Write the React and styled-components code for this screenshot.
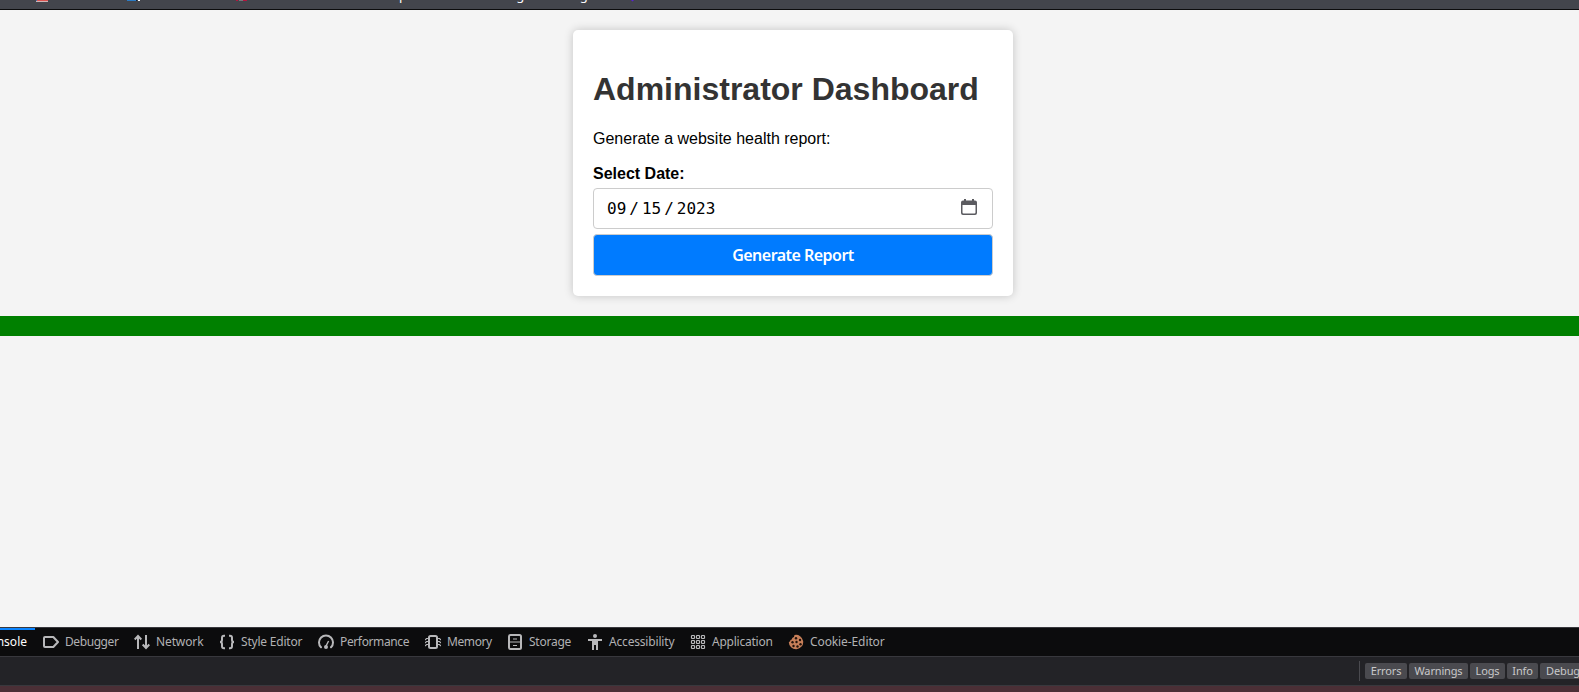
import React from "react";
import styled, { createGlobalStyle } from "styled-components";

const GlobalStyle = createGlobalStyle`
  * { box-sizing: border-box; }
  body { margin: 0; background: #f4f4f4; }
`;

const Screen = styled.div`
  width: 100%;
  height: 692px;
  overflow: hidden;
  display: flex;
  flex-direction: column;
  font-family: "Liberation Sans", Arial, sans-serif;
`;

const BookmarksBar = styled.div`
  height: 10px;
  flex: none;
  background: #43454c;
  border-bottom: 1px solid #0c0c0d;
  overflow: hidden;
  display: flex;
  align-items: flex-end;
  white-space: nowrap;
`;

const BookmarkIcons = styled.svg`
  flex: none;
  width: 385px;
  height: 9px;
`;

const BookmarkLabel = styled.span`
  flex: none;
  width: ${(p) => p.$width}px;
  font: 13px/16px "Noto Sans", sans-serif;
  color: #fbfbfe;
  padding-bottom: 6px;
`;

const BookmarkDot = styled.svg`
  flex: none;
  width: 6px;
  height: 9px;
`;

const Page = styled.main`
  flex: 1;
  padding-top: 20px;
`;

const Card = styled.section`
  width: 440px;
  height: 266px;
  margin: 0 auto 20px 573px;
  padding: 20px;
  background: #fff;
  border-radius: 5px;
  box-shadow: 0 0 10px rgba(0, 0, 0, 0.2);
`;

const Title = styled.h1`
  margin: 21px 0 22px;
  font-size: 32px;
  line-height: 37px;
  color: #333;
`;

const Intro = styled.p`
  margin: 0 0 16px;
  font-size: 16px;
  line-height: 18px;
  color: #000;
`;

const Label = styled.label`
  display: block;
  margin-bottom: 5px;
  font-size: 16px;
  line-height: 19px;
  font-weight: bold;
  color: #000;
`;

const DateField = styled.div`
  height: 41px;
  margin-bottom: 5px;
  padding: 0 14px 0 13px;
  border: 1px solid #ccc;
  border-radius: 4px;
  display: flex;
  align-items: center;
  gap: 3px;
  font: 16px/19px "DejaVu Sans Mono", monospace;
  color: #000;
`;

const CalendarIcon = styled.svg`
  width: 18px;
  height: 18px;
  margin: 0 0 4px auto;
`;

const SubmitButton = styled.button`
  display: block;
  width: 100%;
  height: 42px;
  padding: 0;
  border: 1px solid #ccc;
  border-radius: 4px;
  background: #007bff;
  color: #fff;
  font: 600 16px/22px "Noto Sans", sans-serif;
  letter-spacing: -0.53px;
`;

const GreenStrip = styled.div`
  height: 20px;
  background: #008000;
`;

const DevTools = styled.footer`
  flex: none;
  height: 65px;
  border-top: 1px solid #38383d;
  font: 12px/16px "Noto Sans", sans-serif;
`;

const TabBar = styled.nav`
  height: 29px;
  display: flex;
  overflow: hidden;
  background: #0c0c0d;
  border-bottom: 1px solid #38383d;
`;

const Tab = styled.div`
  flex: none;
  width: ${(p) => p.$width}px;
  height: 28px;
  padding-left: 8px;
  display: flex;
  align-items: center;
  gap: 6px;
  white-space: nowrap;
  letter-spacing: ${(p) => p.$tracking}px;
  color: #b1b1b3;
`;

const ActiveTab = styled.div`
  flex: none;
  width: 35px;
  height: 28px;
  padding-right: 8px;
  display: flex;
  justify-content: flex-end;
  align-items: center;
  color: #fff;
  box-shadow: inset 0 2px #0a84ff;
`;

const TabIcon = styled.svg`
  flex: none;
  width: 16px;
  height: 16px;
  fill: none;
  stroke: #b8b8ba;
  stroke-width: 2;
`;

const FilterBar = styled.div`
  height: 29px;
  padding-left: 1359px;
  display: flex;
  align-items: center;
  gap: 2px;
  overflow: hidden;
  background: #232327;
  border-bottom: 1px solid #38383d;
`;

const Divider = styled.span`
  flex: none;
  width: 1px;
  height: 20px;
  margin-right: 3px;
  background: #4a4a4f;
`;

const Filter = styled.span`
  flex: none;
  width: ${(p) => p.$width}px;
  height: 16px;
  border-radius: 2px;
  background: #4a4a4f;
  color: #c8c8ca;
  font-size: 11px;
  letter-spacing: -0.15px;
  text-align: center;
`;

const ErrorRow = styled.div`
  height: 6px;
  background: #4b2f36;
`;

const icons = {
  debugger: <path d="M2 3h8.3L15 8l-4.7 5H2q-1 0-1-1V4q0-1 1-1Z" strokeLinejoin="round" />,
  network: <path d="M4 15V2M.7 5.5 4 2l3.3 3.5M12 1v13M8.700 10.500 12 14l3.300-3.500" />,
  style: <path d="M6 1.800H5q-2 0-2 2V6q0 2-2 2 2 0 2 2v2.200q0 2 2 2h1M10 1.800h1q2 0 2 2V6q0 2 2 2-2 0-2 2v2.200q0 2-2 2h-1" />,
  performance: (
    <>
      <path d="M3 13.300A7 7 0 1 1 13 13.300" strokeLinecap="round" />
      <path d="M8 12l2.600-5" strokeWidth="1.400" />
      <circle cx="8" cy="13" r="2" fill="#b8b8ba" stroke="none" />
    </>
  ),
  memory: (
    <>
      <rect x="4" y="2" width="8" height="12" rx="1.500" />
      <path d="M3 4.500H1.500L0 6M3 7.500H1.500L0 9M3 10.500H1.500L0 12M13 4.500h1.500L16 6M13 7.500h1.500L16 9M13 10.500h1.500L16 12" strokeWidth="1.200" />
    </>
  ),
  storage: (
    <>
      <rect x="2" y="1" width="12" height="14" rx="1.500" />
      <path d="M2 8h12M6 5h4M6 11.500h4" strokeWidth="1.200" />
    </>
  ),
  accessibility: (
    <g fill="#b8b8ba" stroke="none">
      <circle cx="8" cy="2" r="2" />
      <path d="M1 5h14v2h-4v9H9v-5H7v5H5V7H1Z" />
    </g>
  ),
  application: (
    <g strokeWidth="1.200">
      {[1.5, 6.5, 11.5].flatMap((y) =>
        [1.5, 6.5, 11.5].map((x) => <rect key={`${x}-${y}`} x={x} y={y} width="3" height="3" rx=".7" />)
      )}
    </g>
  ),
  cookie: (
    <g stroke="none">
      <path d="M6.500 1A7.200 7.200 0 1 1 .8 8q1.700-.2 1.600-2 2-.2 1.800-2 2.300-.5 2.300-3Z" fill="#c77f59" />
      <g fill="#22130c">
        <circle cx="8" cy="4.200" r="1.200" />
        <circle cx="12" cy="6" r="1.200" />
        <circle cx="4.500" cy="8.200" r="1.200" />
        <circle cx="8.500" cy="8" r="1.200" />
        <circle cx="12.500" cy="10.200" r="1.200" />
        <circle cx="5.500" cy="12" r="1.200" />
        <circle cx="9.500" cy="12.500" r="1.200" />
      </g>
    </g>
  ),
};

const tabs = [
  { icon: "debugger", label: "Debugger", width: 91, tracking: -0.42 },
  { icon: "network", label: "Network", width: 85, tracking: -0.12 },
  { icon: "style", label: "Style Editor", width: 99, tracking: -0.2 },
  { icon: "performance", label: "Performance", width: 107, tracking: -0.37 },
  { icon: "memory", label: "Memory", width: 82, tracking: -0.4 },
  { icon: "storage", label: "Storage", width: 80, tracking: -0.25 },
  { icon: "accessibility", label: "Accessibility", width: 103, tracking: -0.18 },
  { icon: "application", label: "Application", width: 98, tracking: -0.24 },
  { icon: "cookie", label: "Cookie-Editor", width: 112, tracking: -0.1 },
];

const filters = [
  ["Errors", 42],
  ["Warnings", 59],
  ["Logs", 35],
  ["Info", 31],
  ["Debug", 46],
];

export default function App() {
  return (
    <Screen>
      <GlobalStyle />
      <BookmarksBar>
        <BookmarkIcons viewBox="0 0 385 9">
          <path d="M36 0h12v1H36Z" fill="#d9534f" />
          <path d="M36 0h1v1h-1Z" fill="#3f6eb0" />
          <path d="M36 1h12v1H36Z" fill="#cfb5b6" />
          <path d="M127 0h9v1h-9Z" fill="#2b7bc4" />
          <path d="M136 0h1v1h-1Z" fill="#0c2240" />
          <path d="M138 0h2v1h-2Z" fill="#fff" />
          <path d="M236 0h2v1h-2ZM243 0h4v1h-4Z" fill="#b3163f" />
          <path d="M239 0h4v1h-4Z" fill="#77777c" />
        </BookmarkIcons>
        <BookmarkLabel $width={106}>Exploit-DB</BookmarkLabel>
        <BookmarkLabel $width={139}>Google Hacking DB</BookmarkLabel>
        <BookmarkDot viewBox="0 0 6 9">
          <path d="M1 0h3L2.500 1.500Z" fill="#5b20d6" />
        </BookmarkDot>
      </BookmarksBar>
      <Page>
        <Card>
          <Title>Administrator Dashboard</Title>
          <Intro>Generate a website health report:</Intro>
          <Label>Select Date:</Label>
          <DateField>
            <span>09</span>
            <span>/</span>
            <span>15</span>
            <span>/</span>
            <span>2023</span>
            <CalendarIcon viewBox="0 0 18 18">
              <path d="M4 1h2v1.500h6V1h2v1.500h1q2 0 2 2V15q0 2-2 2H3q-2 0-2-2V4.500q0-2 2-2h1Z" fill="#5b5b60" />
              <path d="M2.500 7h13v7.500q0 1-1 1h-11q-1 0-1-1Z" fill="#fff" />
            </CalendarIcon>
          </DateField>
          <SubmitButton>Generate Report</SubmitButton>
        </Card>
        <GreenStrip />
      </Page>
      <DevTools>
        <TabBar>
          <ActiveTab>Console</ActiveTab>
          {tabs.map((tab) => (
            <Tab key={tab.label} $width={tab.width} $tracking={tab.tracking}>
              <TabIcon viewBox="0 0 16 16">{icons[tab.icon]}</TabIcon>
              {tab.label}
            </Tab>
          ))}
        </TabBar>
        <FilterBar>
          <Divider />
          {filters.map(([name, width]) => (
            <Filter key={name} $width={width}>{name}</Filter>
          ))}
        </FilterBar>
        <ErrorRow />
      </DevTools>
    </Screen>
  );
}
